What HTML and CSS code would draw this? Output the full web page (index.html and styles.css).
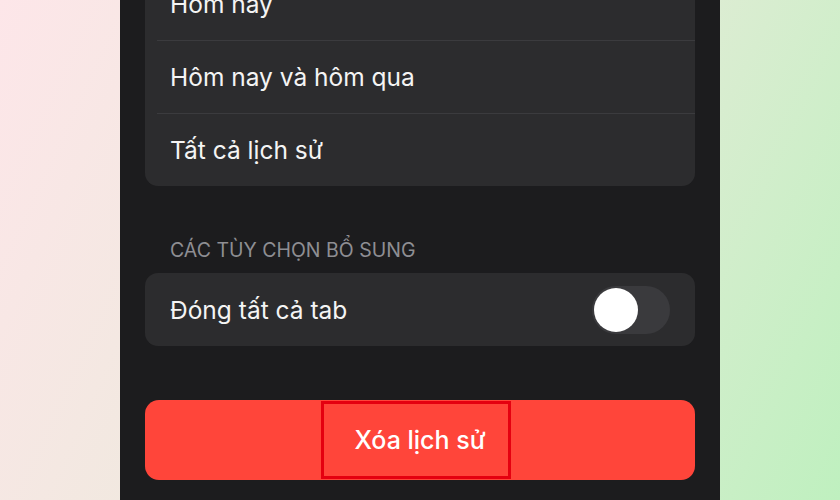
FILE: index.html
```html
<!DOCTYPE html>
<html lang="vi">
<head>
<meta charset="utf-8">
<link rel="stylesheet" href="styles.css">
</head>
<body>
<div class="stage">
  <div class="side"></div>
  <main class="panel">
    <section class="card first">
      <div class="row">Hôm nay</div>
      <div class="row">Hôm nay và hôm qua</div>
      <div class="row">Tất cả lịch sử</div>
    </section>
    <h2 class="section-title">CÁC TÙY CHỌN BỔ SUNG</h2>
    <section class="card">
      <div class="row toggle-row">
        <span>Đóng tất cả tab</span>
        <span class="toggle"><span class="knob"></span></span>
      </div>
    </section>
    <button class="danger">
      <span>Xóa lịch sử</span>
      <span class="highlight"></span>
    </button>
  </main>
  <div class="side"></div>
</div>
</body>
</html>
```
FILE: styles.css
```css
html, body {
  margin: 0;
  padding: 0;
  width: 840px;
  height: 500px;
  overflow: hidden;
}
body {
  background: linear-gradient(115deg, #fde6e9 0%, #efe9de 40%, #e0ecd5 62%, #bff0bf 100%);
  font-family: Inter, "Noto Sans", sans-serif;
}
.stage {
  display: flex;
  height: 500px;
}
.side {
  width: 120px;
  flex: none;
}
.panel {
  width: 600px;
  flex: none;
  background: #1c1c1e;
  padding: 0 25px;
  box-sizing: border-box;
  display: flex;
  flex-direction: column;
}
.card {
  background: #2c2c2e;
  border-radius: 13px;
  overflow: hidden;
}
.card.first {
  margin-top: -33px;
}
.row {
  height: 73px;
  display: flex;
  align-items: center;
  padding-left: 25px;
  color: #f4f4f4;
  font-size: 24.5px;
  position: relative;
  box-sizing: border-box;
}
.row + .row::before {
  content: "";
  position: absolute;
  top: -0.5px;
  left: 12px;
  right: 0;
  height: 1px;
  background: #3b3b3e;
}
.section-title {
  margin: 53px 0 12px 25px;
  font-size: 19.5px;
  font-weight: 400;
  color: #8e8e93;
  line-height: 22px;
}
.toggle-row {
  justify-content: space-between;
  padding-right: 25px;
}
.toggle {
  width: 78px;
  height: 48px;
  border-radius: 24px;
  background: #3a3a3d;
  display: flex;
  align-items: center;
  padding: 0 2px;
  box-sizing: border-box;
}
.knob {
  width: 44px;
  height: 44px;
  border-radius: 50%;
  background: #ffffff;
}
.danger {
  margin-top: 54px;
  height: 80px;
  border: none;
  border-radius: 14px;
  background: #ff453a;
  color: #ffffff;
  font-family: inherit;
  font-size: 25px;
  font-weight: 500;
  position: relative;
  padding: 0;
  display: flex;
  align-items: center;
  justify-content: center;
}
.highlight {
  position: absolute;
  left: 176px;
  top: 1px;
  width: 190px;
  height: 78px;
  border: 3px solid #e50010;
  box-sizing: border-box;
}
```
